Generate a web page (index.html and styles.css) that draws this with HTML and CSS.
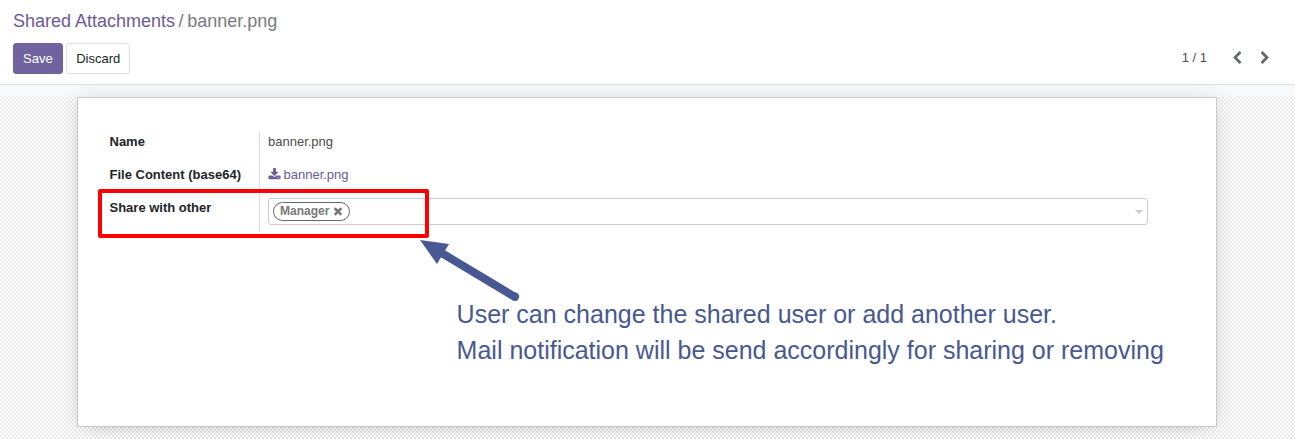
FILE: index.html
```html
<!DOCTYPE html>
<html lang="en">
<head>
<meta charset="utf-8">
<title>banner.png</title>
<link rel="stylesheet" href="styles.css">
</head>
<body>
<header class="control-panel">
  <nav class="breadcrumb"><a class="crumb-link">Shared Attachments</a><span class="crumb-sep">/</span><span>banner.png</span></nav>
  <div class="toolbar">
    <div class="buttons">
      <button class="btn btn-primary">Save</button>
      <button class="btn btn-secondary">Discard</button>
    </div>
    <div class="pager">
      <span class="pager-count">1 / 1</span>
      <svg class="chevron" viewBox="0 0 1792 1792"><path d="M1427 301l-531 531 531 531q19 19 19 45t-19 45l-166 166q-19 19-45 19t-45-19l-742-742q-19-19-19-45t19-45l742-742q19-19 45-19t45 19l166 166q19 19 19 45t-19 45z"/></svg>
      <svg class="chevron" viewBox="0 0 1792 1792"><path d="M1363 877l-742 742q-19 19-45 19t-45-19l-166-166q-19-19-19-45t19-45l531-531-531-531q-19-19-19-45t19-45l166-166q19-19 45-19t45 19l742 742q19 19 19 45t-19 45z"/></svg>
    </div>
  </div>
</header>
<main class="content">
  <div class="backdrop">
    <section class="sheet">
      <div class="group">
        <div class="labels">
          <label>Name</label>
          <label>File Content (base64)</label>
          <label>Share with other</label>
        </div>
        <div class="values">
          <div class="value">banner.png</div>
          <div class="value file"><svg class="download" viewBox="0 0 1792 1792"><path d="M1344 1344q0-26-19-45t-45-19-45 19-19 45 19 45 45 19 45-19 19-45zm256 0q0-26-19-45t-45-19-45 19-19 45 19 45 45 19 45-19 19-45zm128-224v320q0 40-28 68t-68 28h-1472q-40 0-68-28t-28-68v-320q0-40 28-68t68-28h465l135 136q58 56 136 56t136-56l136-136h464q40 0 68 28t28 68zm-325-569q17 41-14 70l-448 448q-18 19-45 19t-45-19l-448-448q-31-29-14-70 17-39 59-39h256v-448q0-26 19-45t45-19h256q26 0 45 19t19 45v448h256q42 0 59 39z"/></svg><a>banner.png</a></div>
          <div class="tag-input">
            <span class="tag">Manager<svg class="remove" viewBox="0 0 1792 1792"><path d="M1490 1322q0 40-28 68l-136 136q-28 28-68 28t-68-28l-294-294-294 294q-28 28-68 28t-68-28l-136-136q-28-28-28-68t28-68l294-294-294-294q-28-28-28-68t28-68l136-136q28-28 68-28t68 28l294 294 294-294q28-28 68-28t68 28l136 136q28 28 28 68t-28 68l-294 294 294 294q28 28 28 68z"/></svg></span>
            <span class="caret"></span>
          </div>
        </div>
      </div>
    </section>
  </div>
</main>
<div class="highlight"></div>
<svg class="arrow" width="110" height="70" viewBox="415 235 110 70">
  <path d="M420 240L449 244L437 264Z"/>
  <path class="shaft" d="M442.500 253.500L515 297"/>
  <circle cx="515" cy="296.800" r="4.200"/>
</svg>
<p class="note">User can change the shared user or add another user.<br>Mail notification will be send accordingly for sharing or removing</p>
</body>
</html>
```
FILE: styles.css
```css
* { box-sizing: border-box; }
body {
  margin: 0;
  height: 439px;
  overflow: hidden;
  display: flex;
  flex-direction: column;
  position: relative;
  background: #fff;
  color: #4c4c4c;
  font: 13px/20px "Liberation Sans", Arial, sans-serif;
}
.control-panel {
  height: 85px;
  padding: 8px 13px 0;
  border-bottom: 1px solid #dcdfe6;
}
.breadcrumb {
  font-size: 18px;
  line-height: 27px;
  height: 35px;
  color: #777b7e;
}
.crumb-link { color: #6b5b95; }
.crumb-sep { margin: 0 3.5px; }
.toolbar { display: flex; justify-content: space-between; }
.buttons { display: flex; gap: 3px; }
.btn {
  height: 31px;
  padding: 0 9px;
  border: 1px solid #dee2e6;
  border-radius: 3px;
  font: inherit;
  background: #fff;
  color: #212529;
}
.btn-primary { background: #71639e; border-color: #71639e; color: #fff; }
.btn-secondary { padding: 0 8.5px 0 9.5px; }
.pager { display: flex; align-items: center; height: 30px; padding-right: 10px; }
.pager-count { margin-right: 23px; }
.chevron { width: 14px; height: 14px; fill: #666a6d; }
.chevron + .chevron { margin-left: 14px; }
.content { flex: 1; padding-top: 12px; background: #f8f9fb; }
.backdrop {
  height: 342px;
  padding: 0 78px 0 77px;
  background: repeating-conic-gradient(#ececec 0 25%, #fefefe 0 50%) 0 0 / 4px 4px;
}
.sheet {
  height: 330px;
  padding: 34px 68px 0 31px;
  background: #fff;
  border: 1px solid #c8c8d3;
  box-shadow: 0 5px 20px -15px rgba(0, 0, 0, .4), 0 0 20px rgba(0, 0, 0, .1);
}
.group { display: flex; }
.labels {
  width: 151px;
  height: 99px;
  padding-left: .5px;
  border-right: 1px solid #ddd;
  display: flex;
  flex-direction: column;
  gap: 13px;
  color: #212529;
  font-weight: bold;
}
.values { flex: 1; padding-left: 8px; }
.value { height: 33px; }
.file { display: flex; color: #6b5b95; }
.download { width: 13px; height: 13px; margin: 3px 3px 0 -.5px; fill: #6b5b95; }
.tag-input {
  height: 27px;
  padding: 0 4px;
  display: flex;
  align-items: center;
  justify-content: space-between;
  border: 1px solid #ccc;
  border-radius: 3px;
}
.tag {
  height: 19px;
  padding: 0 5px 1px 6px;
  display: flex;
  align-items: center;
  border: 1px solid #666;
  border-radius: 10px;
  color: #777;
  font-size: 12px;
  font-weight: bold;
}
.remove { width: 12px; height: 12px; margin-left: 3px; fill: #777; }
.caret { border: 4px solid transparent; border-top-color: #ccc; border-bottom: 0; }
.highlight {
  position: absolute;
  left: 98px;
  top: 189px;
  width: 331px;
  height: 49px;
  border: 4px solid #f00;
  border-radius: 2px;
}
.arrow { position: absolute; left: 415px; top: 235px; fill: #485892; }
.shaft { stroke: #485892; stroke-width: 8px; }
.note {
  position: absolute;
  left: 456.6px;
  top: 296px;
  margin: 0;
  color: #485892;
  font-size: 25px;
  line-height: 36px;
  white-space: nowrap;
}
```
